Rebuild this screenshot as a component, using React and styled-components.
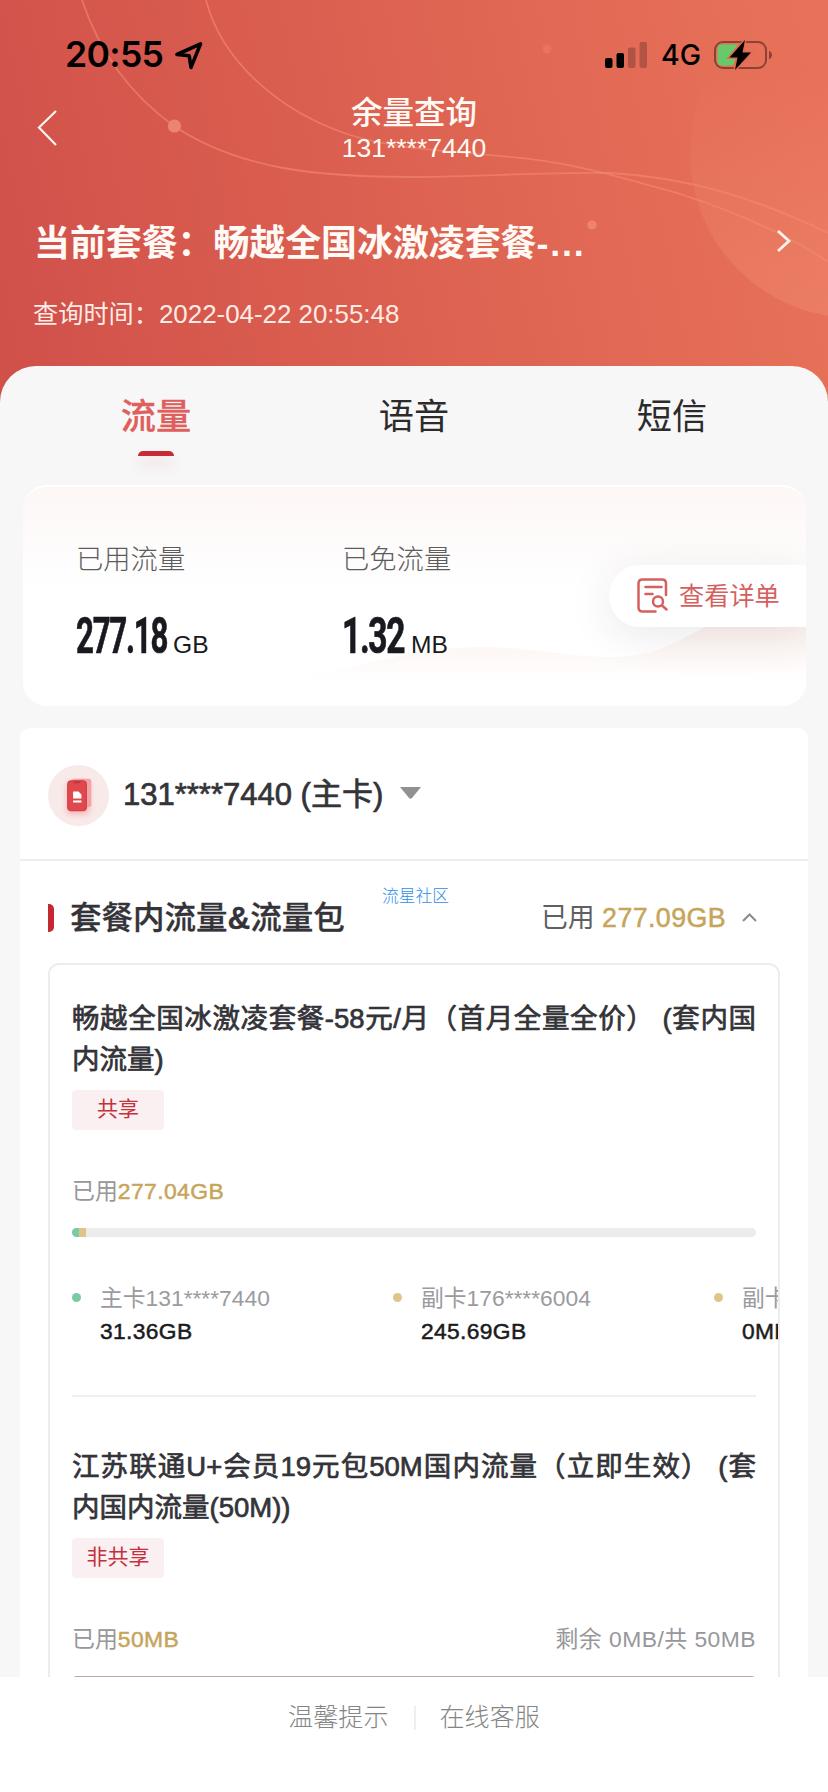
import React from "react";
import styled, { createGlobalStyle } from "styled-components";

const GlobalStyle = createGlobalStyle`
  * {
    box-sizing: border-box;
  }
  body {
    margin: 0;
    font-family: "Liberation Sans", "Noto Sans CJK SC", sans-serif;
    color: #333338;
  }
`;

const Page = styled.div`
  width: 828px;
  height: 1792px;
  display: flex;
  flex-direction: column;
  overflow: hidden;
  background: #fff;
`;

const Scroll = styled.div`
  height: 1677px;
  flex: none;
  overflow: hidden;
  background: linear-gradient(78deg, #d0504a 0%, #db5f50 42%, #e36b56 75%, #e87259 100%) 0 0 / 100% 420px no-repeat;
  position: relative;
`;

const Decor = styled.svg`
  position: absolute;
  top: 0;
  left: 0;
`;

const Header = styled.header`
  position: relative;
  height: 366px;
  color: #fffaf5;
`;

const StatusBar = styled.div`
  height: 92px;
  padding: 33px 55px 0 65px;
  display: flex;
  align-items: flex-start;
  justify-content: space-between;
  color: #000;
  font-family: Inter, sans-serif;
`;

const StatusSide = styled.div`
  display: flex;
  align-items: center;
  height: 44px;
`;

const Clock = styled.span`
  width: 110px;
  font-size: 35.6px;
  font-weight: 600;
  line-height: 44px;
  letter-spacing: -0.7px;
  white-space: nowrap;
`;

const Network = styled.span`
  width: 53px;
  margin-left: 13px;
  font-size: 28.5px;
  font-weight: 500;
  line-height: 46px;
`;

const NavBar = styled.div`
  height: 104px;
  padding: 0 36px;
  display: grid;
  grid-template-columns: 60px 1fr 60px;
`;

const BackIcon = styled.svg`
  margin-top: 17px;
`;

const NavTitle = styled.div`
  padding-top: 2px;
  text-align: center;
  font-size: 31.5px;
  font-weight: 500;
  line-height: 38px;
`;

const NavPhone = styled.div`
  text-align: center;
  font-size: 26.5px;
  line-height: 32px;
`;

const PlanRow = styled.div`
  height: 92px;
  padding: 0 36px 0 34px;
  display: flex;
  align-items: center;
  justify-content: space-between;
`;

const PlanName = styled.div`
  padding-top: 3px;
  font-size: 35.9px;
  font-weight: 700;
  line-height: 46px;
  white-space: nowrap;
`;

const PlanTail = styled.span`
  letter-spacing: 1.8px;
`;

const QueryTime = styled.div`
  padding-left: 33px;
  margin-top: 8px;
  font-size: 25.2px;
  line-height: 36px;
  color: #fdebe4;
`;

const Timestamp = styled.span`
  font-size: 25.9px;
`;

const Panel = styled.main`
  position: relative;
  height: 1400px;
  border-radius: 36px 36px 0 0;
  background: #f7f7f7;
`;

const Tabs = styled.nav`
  height: 119px;
  padding: 0 27px;
  display: grid;
  grid-template-columns: repeat(3, 1fr);
`;

const Tab = styled.div`
  padding-top: 27px;
  display: flex;
  flex-direction: column;
  align-items: center;
  font-size: 35.2px;
  line-height: 48px;
  font-weight: ${(p) => (p.$active ? 500 : 400)};
  -webkit-text-stroke: ${(p) => (p.$active ? "0.3px currentColor" : "0")};
  color: ${(p) => (p.$active ? "#de5f5d" : "#2b2b2b")};
`;

const TabMark = styled.i`
  width: 36px;
  height: 5px;
  margin-top: 10px;
  border-radius: 5px 5px 0 0;
  background: #c62b36;
  box-shadow: 0 9px 14px rgba(222, 60, 70, 0.18);
`;

const Summary = styled.section`
  position: relative;
  height: 221px;
  margin: 0 22px 0 23px;
  border-radius: 24px;
  overflow: hidden;
  display: flex;
  background: linear-gradient(#fdf7f6 0, #fefcfc 70px, #fff 100px);
  border-top: 2px solid #fff;
`;

const Wave = styled.svg`
  position: absolute;
  left: 0;
  bottom: 0;
`;

const Metric = styled.div`
  position: relative;
  width: 266px;
  padding: 54px 0 0 53px;
`;

const MetricLabel = styled.div`
  font-size: 27.3px;
  font-weight: 300;
  line-height: 38px;
  color: #5c5c5c;
`;

const MetricValue = styled.div`
  margin-top: 32px;
  display: flex;
  align-items: baseline;
  line-height: 50px;
  color: #191920;
`;

const Figure = styled.div`
  width: ${(p) => p.$width}px;
  font-family: Roboto, sans-serif;
  font-size: 50px;
  font-weight: 700;
  letter-spacing: -2px;
  white-space: nowrap;

  span {
    display: inline-block;
    transform: scaleX(${(p) => p.$squeeze});
    transform-origin: 0 50%;
    -webkit-text-stroke: 0.7px currentColor;
  }
`;

const Unit = styled.span`
  font-size: 24.6px;
`;

const DetailButton = styled.button`
  position: relative;
  width: 197px;
  height: 62px;
  margin: 78px 0 0 auto;
  padding: 0 0 0 28px;
  display: flex;
  align-items: center;
  gap: 11px;
  border: 0;
  border-radius: 31px 0 0 31px;
  background: #fff;
  box-shadow: 0 8px 44px rgba(60, 40, 40, 0.1);
  font: 25.2px/34px "Liberation Sans", "Noto Sans CJK SC", sans-serif;
  color: #d65f60;
  white-space: nowrap;
`;

const Card = styled.section`
  height: 1100px;
  margin: 22px 20px 0;
  border-radius: 10px;
  background: #fff;
`;

const CardHead = styled.div`
  height: 133px;
  padding: 4px 28px 0;
  display: flex;
  align-items: center;
  border-bottom: 2px solid #ededed;
  font-size: 31px;
  line-height: 40px;
  -webkit-text-stroke: 0.7px currentColor;
`;

const CardNumber = styled.span`
  margin: 0 17px 2px 14px;
  white-space: nowrap;
`;

const Caret = styled.svg`
  margin-bottom: 5px;
`;

const SectionHead = styled.div`
  position: relative;
  height: 102px;
  padding: 12px 51px 0 28px;
  display: flex;
  align-items: center;
`;

const SectionMark = styled.i`
  width: 6px;
  height: 28px;
  border-radius: 0 5px 5px 0;
  background: #c42833;
`;

const SectionTitle = styled.h2`
  margin: 0 auto 0 16px;
  font-size: 31.5px;
  font-weight: 500;
  line-height: 40px;
  white-space: nowrap;
  -webkit-text-stroke: 0.3px currentColor;

  b {
    font-weight: 700;
  }
`;

const SectionUsed = styled.div`
  margin-right: 16px;
  font-size: 26.8px;
  line-height: 40px;
  color: #606064;
  white-space: nowrap;
`;

const Gold = styled.span`
  color: #c6a55b;
  letter-spacing: 0.4px;
  -webkit-text-stroke: 0.5px currentColor;
`;

const Watermark = styled.span`
  position: absolute;
  left: 362px;
  top: 23px;
  font-size: 16.8px;
  font-weight: 300;
  line-height: 26px;
  color: #2f8eea;
`;

const PackageBox = styled.div`
  height: 900px;
  margin: 0 28px;
  padding: 34px 0 0 22px;
  border: 2px solid #ededed;
  border-radius: 11px;
  overflow: hidden;
`;

const Package = styled.article`
  height: 448px;
`;

const PackageTitle = styled.h3`
  width: 684px;
  margin: 0;
  font-size: 27.5px;
  font-weight: 400;
  line-height: 40.5px;
`;

const TitleLine = styled.span`
  display: block;
  white-space: nowrap;
  text-align-last: ${(p) => (p.$full ? "justify" : "left")};
  -webkit-text-stroke: 0.7px currentColor;
`;

const Tag = styled.div`
  width: 92px;
  height: 40px;
  margin-top: 10px;
  border-radius: 4px;
  background: #faeff1;
  font-size: 21px;
  line-height: 38px;
  text-align: center;
  color: #c4303b;
`;

const UsageRow = styled.div`
  width: 684px;
  height: 36px;
  margin-top: 43px;
  display: flex;
  justify-content: space-between;
  font-size: 22.9px;
  line-height: 36px;
  color: #97979b;
`;

const Remaining = styled.span`
  letter-spacing: 0.45px;
`;

const Bar = styled.div`
  width: 684px;
  height: 9px;
  margin-top: 19px;
  display: flex;
  border-radius: 5px;
  overflow: hidden;
  background: ${(p) => p.$track};
`;

const BarPart = styled.i`
  width: 7px;
  background: ${(p) => p.$color};
`;

const Shares = styled.div`
  height: 158px;
  padding-top: 42px;
  display: flex;
`;

const Share = styled.div`
  width: 321px;
  flex: none;
  display: grid;
  grid-template-columns: 28px 1fr;
  grid-template-rows: 34px 37px;
  align-items: center;
  align-content: start;
  font-size: 22.8px;
  white-space: nowrap;
`;

const Dot = styled.i`
  width: 9px;
  height: 9px;
  margin-top: 3px;
  border-radius: 50%;
  background: ${(p) => p.$color};
`;

const ShareName = styled.span`
  color: #9b9b9f;
`;

const ShareValue = styled.span`
  grid-column: 2;
  color: #1b1b20;
  letter-spacing: 0.35px;
  -webkit-text-stroke: 0.5px currentColor;
`;

const Rule = styled.div`
  width: 684px;
  height: 2px;
  margin-bottom: 50px;
  background: #f0f0f0;
`;

const Footer = styled.footer`
  flex: 1;
  padding-top: 22px;
  display: flex;
  align-items: flex-start;
  justify-content: center;
  font-size: 25.1px;
  font-weight: 300;
  line-height: 36px;
  color: #858585;
`;

const FooterRule = styled.i`
  width: 2px;
  height: 24px;
  margin: 7px 24px 0 25px;
  background: #eee;
`;

const GREEN = "#7acba5";
const SAND = "#e0c588";

const packages = [
  {
    lines: ["畅越全国冰激凌套餐-58元/月（首月全量全价） (套内国", "内流量)"],
    tag: "共享",
    used: "277.04GB",
    track: "#ececec",
    parts: [GREEN, SAND],
    shares: [
      { name: "主卡131****7440", value: "31.36GB", color: GREEN },
      { name: "副卡176****6004", value: "245.69GB", color: SAND },
      { name: "副卡", value: "0MB", color: SAND },
    ],
  },
  {
    lines: ["江苏联通U+会员19元包50M国内流量（立即生效） (套", "内国内流量(50M))"],
    tag: "非共享",
    used: "50MB",
    rest: "剩余 0MB/共 50MB",
    track: "#c4a0a6",
    parts: [],
  },
];

const HeaderDecor = () => (
  <Decor width="828" height="400" fill="none">
    <defs>
      <linearGradient id="orb" x1="0" y1="0" x2="0" y2="1">
        <stop offset="0.25" stopColor="#ffb493" stopOpacity="0" />
        <stop offset="1" stopColor="#ffb493" stopOpacity="0.2" />
      </linearGradient>
    </defs>
    <circle cx="855" cy="153" r="165" fill="url(#orb)" />
    <g stroke="#f58a70" strokeOpacity="0.6" strokeWidth="1.8">
      <path d="M82 0C98 48 128 93 174 126C240 170 320 177 414 177C490 176 550 172 610 173C690 177 760 200 828 233" />
      <path d="M206 0C222 62 280 112 350 135C400 150 450 151 500 156C570 161 620 177 680 194C730 210 790 235 828 262" />
    </g>
    <circle cx="174.500" cy="126" r="6.600" fill="#ed8470" />
    <circle cx="547" cy="49" r="4.500" fill="#e6745f" />
    <circle cx="592" cy="225" r="4.600" fill="#ec8470" />
  </Decor>
);

const LocationArrow = () => (
  <svg width="28" height="29" viewBox="0 0 28 29" fill="none">
    <path
      d="M2 13.500L25.500 2.800L16 26.300L14.200 14.700Z"
      stroke="#000"
      strokeWidth="3.600"
      strokeLinejoin="round"
    />
  </svg>
);

const Signal = () => (
  <svg width="43" height="28" viewBox="0 0 43 28">
    <rect x="0" y="17" width="7.500" height="10" rx="2" />
    <rect x="11.500" y="12" width="7.500" height="15" rx="2" />
    <rect x="23" y="6.500" width="7.500" height="20.500" rx="2" fillOpacity="0.22" />
    <rect x="34.500" y="1" width="7.500" height="26" rx="2" fillOpacity="0.22" />
  </svg>
);

const Battery = () => (
  <svg width="59" height="30" viewBox="0 0 59 30" fill="none">
    <rect x="1" y="2" width="51" height="26" rx="8" stroke="#000" strokeOpacity="0.4" strokeWidth="2" />
    <path d="M55 11C59 12 59 18 55 19Z" fill="#000" fillOpacity="0.4" />
    <path d="M8 4.500H24L14 17.500H22L19 25.500H8Q3.500 25.500 3.500 21V9Q3.500 4.500 8 4.500Z" fill="#66ca6a" />
    <path d="M31 0L15.500 17.500H23.500L21 30L37 12.500H28.500Z" fill="#000" stroke="#e06b55" strokeWidth="3" paintOrder="stroke" />
  </svg>
);

const DetailIcon = () => (
  <svg width="31" height="36" viewBox="0 0 31 36" fill="none" stroke="#d65f60" strokeWidth="2.500" strokeLinecap="round">
    <path d="M29 17V5.500Q29 1.500 25 1.500H5.500Q1.500 1.500 1.500 5.500V29Q1.500 33.500 5.500 33.500H18.500" />
    <path d="M8.500 9H24.500M8.500 16H15.500" />
    <circle cx="21" cy="23.500" r="5" />
    <path d="M25 27.500L29.500 31.500" />
  </svg>
);

const SimIcon = () => (
  <svg width="61" height="61" viewBox="0 0 62 62">
    <defs>
      <filter id="soft" x="-50%" y="-50%" width="200%" height="200%">
        <feGaussianBlur stdDeviation="3" />
      </filter>
    </defs>
    <circle cx="31" cy="31" r="31" fill="#f9eaea" />
    <rect x="19" y="18" width="23" height="32" rx="4" fill="#f08080" fillOpacity="0.5" filter="url(#soft)" />
    <rect x="24" y="14" width="20" height="29" rx="3" fill="#f2a3a3" />
    <rect x="20" y="16" width="19" height="30.500" rx="3" fill="#df484c" stroke="#cc3b40" />
    <path d="M25.500 27H31L34 30V34H25.500ZM25.500 36H34V38H25.500Z" fill="#fff" />
    <path d="M26 16.500H33V18.500H26Z" fill="#b93a3d" />
  </svg>
);

const PackageItem = ({ item }) => (
  <Package>
    <PackageTitle>
      {item.lines.map((line, i) => (
        <TitleLine key={line} $full={i === 0}>
          {line}
        </TitleLine>
      ))}
    </PackageTitle>
    <Tag>{item.tag}</Tag>
    <UsageRow>
      <span>
        已用<Gold>{item.used}</Gold>
      </span>
      {item.rest && <Remaining>{item.rest}</Remaining>}
    </UsageRow>
    <Bar $track={item.track}>
      {item.parts.map((color) => (
        <BarPart key={color} $color={color} />
      ))}
    </Bar>
    {item.shares && (
      <>
        <Shares>
          {item.shares.map((share) => (
            <Share key={share.name}>
              <Dot $color={share.color} />
              <ShareName>{share.name}</ShareName>
              <ShareValue>{share.value}</ShareValue>
            </Share>
          ))}
        </Shares>
        <Rule />
      </>
    )}
  </Package>
);

const App = () => {
  return (
    <Page>
      <GlobalStyle />
      <Scroll>
        <HeaderDecor />
        <Header>
          <StatusBar>
            <StatusSide>
              <Clock>20:55</Clock>
              <LocationArrow />
            </StatusSide>
            <StatusSide>
              <Signal />
              <Network>4G</Network>
              <Battery />
            </StatusSide>
          </StatusBar>
          <NavBar>
            <BackIcon width="22" height="38" fill="none" stroke="#fff4ee" strokeWidth="2.200">
              <path d="M20 2L3 18.500L20 36" />
            </BackIcon>
            <div>
              <NavTitle>余量查询</NavTitle>
              <NavPhone>131****7440</NavPhone>
            </div>
          </NavBar>
          <PlanRow>
            <PlanName>
              当前套餐：畅越全国冰激凌套餐<PlanTail>-...</PlanTail>
            </PlanName>
            <svg width="16" height="24" fill="none" stroke="#fff4ee" strokeWidth="2.800">
              <path d="M2 1L13 11L2 21" />
            </svg>
          </PlanRow>
          <QueryTime>
            查询时间：<Timestamp>2022-04-22 20:55:48</Timestamp>
          </QueryTime>
        </Header>

        <Panel>
          <Tabs>
            <Tab $active>
              流量
              <TabMark />
            </Tab>
            <Tab>语音</Tab>
            <Tab>短信</Tab>
          </Tabs>

          <Summary>
            <Wave width="783" height="90" viewBox="0 0 783 90">
              <defs>
                <linearGradient id="wave" x1="0" y1="0" x2="0" y2="1">
                  <stop offset="0" stopColor="#fbeeea" />
                  <stop offset="0.75" stopColor="#fff" />
                </linearGradient>
              </defs>
              <path d="M275 64C340 48 400 30 465 31C520 33 550 42 595 41C640 39 660 20 690 8C720 -2 750 -5 783 -6V90H275Z" fill="url(#wave)" />
            </Wave>
            <Metric>
              <MetricLabel>已用流量</MetricLabel>
              <MetricValue>
                <Figure $width={97} $squeeze={0.625}>
                  <span>277.18</span>
                </Figure>
                <Unit>GB</Unit>
              </MetricValue>
            </Metric>
            <Metric>
              <MetricLabel>已免流量</MetricLabel>
              <MetricValue>
                <Figure $width={69} $squeeze={0.67}>
                  <span>1.32</span>
                </Figure>
                <Unit>MB</Unit>
              </MetricValue>
            </Metric>
            <DetailButton>
              <DetailIcon />
              查看详单
            </DetailButton>
          </Summary>

          <Card>
            <CardHead>
              <SimIcon />
              <CardNumber>131****7440 (主卡)</CardNumber>
              <Caret width="22" height="14" fill="#919191">
                <path d="M0 1H21L12 12Q10.500 13.500 9 12Z" />
              </Caret>
            </CardHead>
            <SectionHead>
              <SectionMark />
              <SectionTitle>
                套餐内流量<b>&amp;</b>流量包
              </SectionTitle>
              <SectionUsed>
                已用 <Gold>277.09GB</Gold>
              </SectionUsed>
              <svg width="15" height="10" fill="none" stroke="#8b8b8b" strokeWidth="2">
                <path d="M1 8L7.500 1.500L14 8" />
              </svg>
              <Watermark>流星社区</Watermark>
            </SectionHead>
            <PackageBox>
              {packages.map((item) => (
                <PackageItem key={item.tag} item={item} />
              ))}
            </PackageBox>
          </Card>
        </Panel>
      </Scroll>
      <Footer>
        <span>温馨提示</span>
        <FooterRule />
        <span>在线客服</span>
      </Footer>
    </Page>
  );
};

export default App;
